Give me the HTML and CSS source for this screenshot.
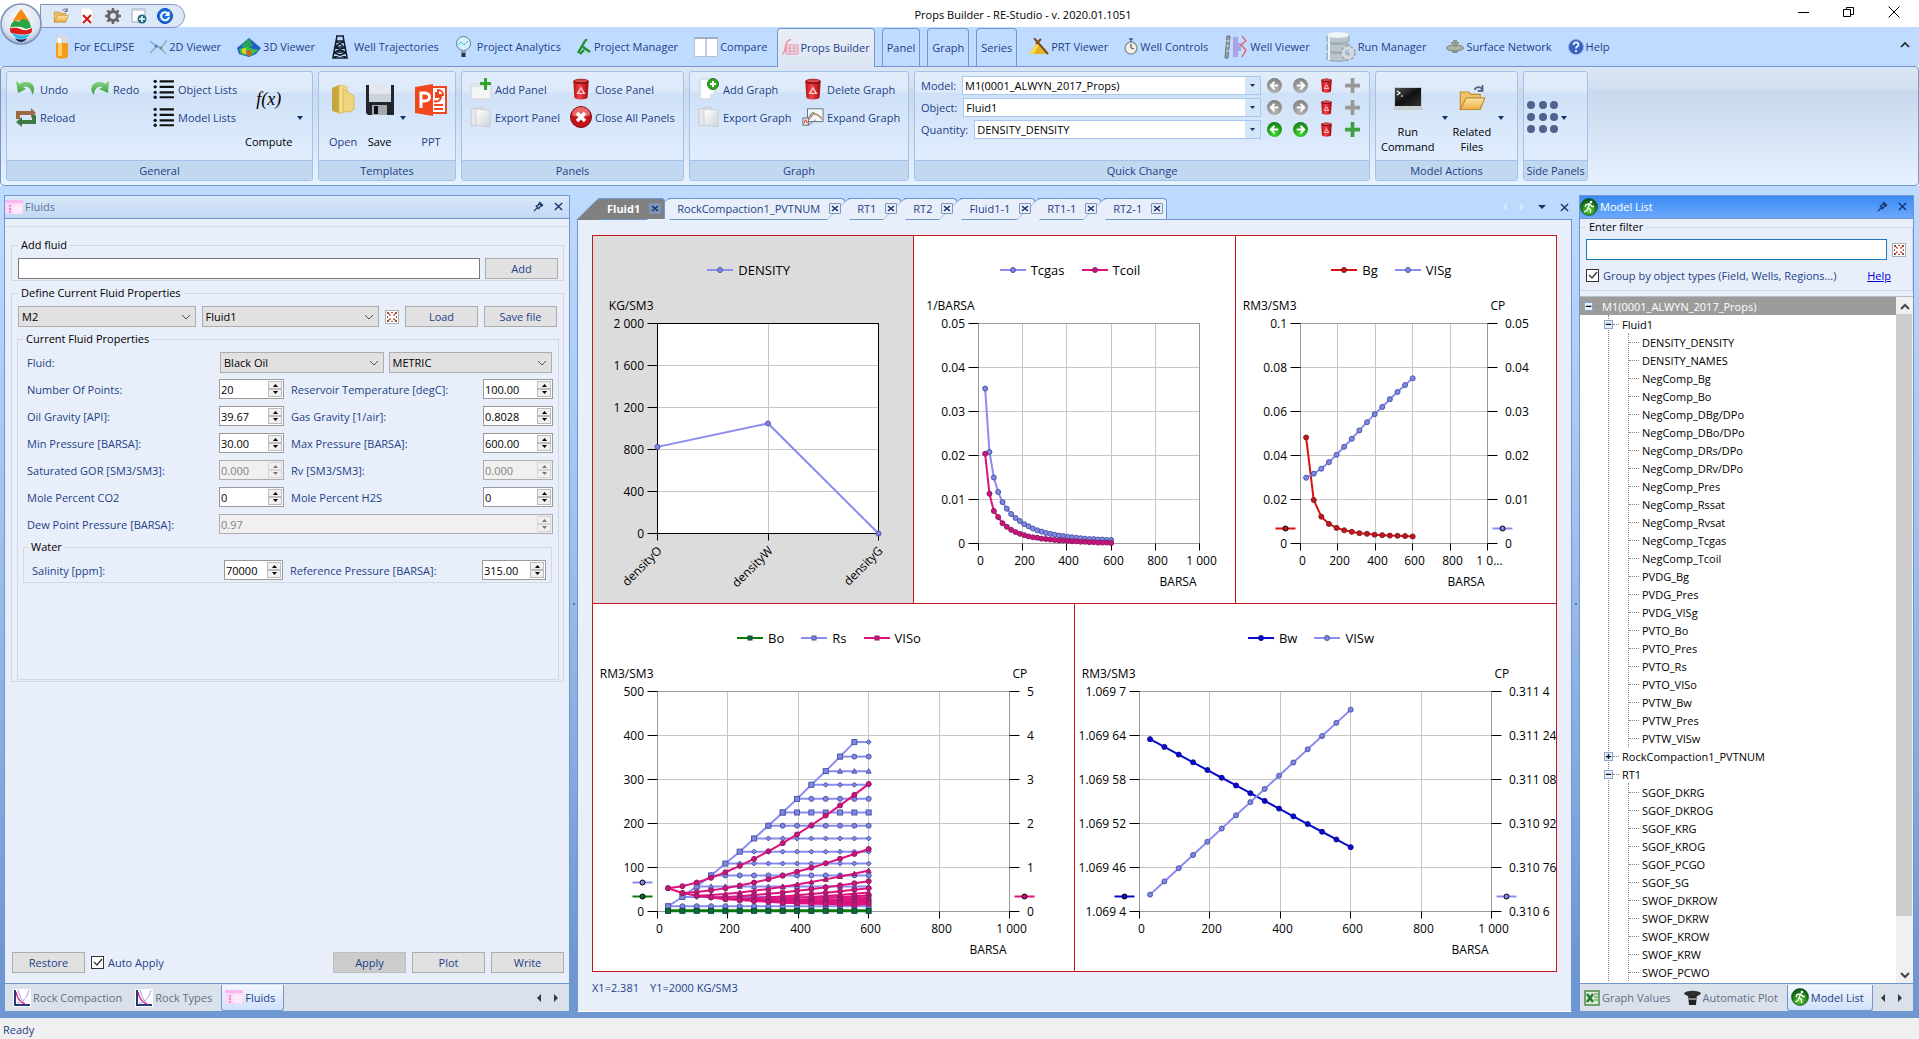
FILE: index.html
```html
<!DOCTYPE html>
<html lang="en">
<head>
  <meta charset="UTF-8">
  <meta name="viewport" content="width=device-width, initial-scale=1.0">
  <title>Props Builder - RE-Studio - v. 2020.01.1051</title>
  <link rel="stylesheet" href="styles.css">
</head>
<body>
  <!-- Shared icons -->
  <svg class="sprite" aria-hidden="true">
    <defs>
      <linearGradient id="gFolder" x1="0" y1="0" x2="0" y2="1"><stop offset="0" stop-color="#fde6a6"/><stop offset="1" stop-color="#e9ac45"/></linearGradient>
      <linearGradient id="gGreen" x1="0" y1="0" x2="0" y2="1"><stop offset="0" stop-color="#8fd487"/><stop offset="1" stop-color="#2f9a33"/></linearGradient>
      <linearGradient id="gRed" x1="0" y1="0" x2="1" y2="0"><stop offset="0" stop-color="#b30d12"/><stop offset=".4" stop-color="#f0444a"/><stop offset="1" stop-color="#a3070c"/></linearGradient>
      <linearGradient id="gPage" x1="0" y1="0" x2="1" y2="1"><stop offset="0" stop-color="#fff"/><stop offset="1" stop-color="#cfd3d8"/></linearGradient>
      <linearGradient id="gBlack" x1="0" y1="0" x2="1" y2="1"><stop offset="0" stop-color="#555"/><stop offset=".5" stop-color="#111"/><stop offset="1" stop-color="#333"/></linearGradient>
      <radialGradient id="gRunner" cx=".5" cy=".7" r=".6"><stop offset="0" stop-color="#5fd42c"/><stop offset="1" stop-color="#0b5c16"/></radialGradient>
      <radialGradient id="gOrb" cx=".5" cy=".35" r=".7"><stop offset="0" stop-color="#fff"/><stop offset=".7" stop-color="#d9e2f0"/><stop offset="1" stop-color="#8ea4c9"/></radialGradient>
    </defs>
    <symbol id="folder" viewBox="0 0 24 24">
      <path d="M2 21V6h7l2 2h8v13z" fill="#f0c266" stroke="#c48b2b"/>
      <path d="M2 21l5-10h16l-4 10z" fill="url(#gFolder)" stroke="#c48b2b"/>
      <path d="M14 4c2-3 5-3 7 0M21 0v5h-4" fill="none" stroke="#4a607c" stroke-width="1.5"/>
    </symbol>
    <symbol id="list" viewBox="0 0 20 18">
      <g fill="#111"><circle cx="2" cy="2" r="1.5"/><circle cx="2" cy="7" r="1.5"/><circle cx="2" cy="12" r="1.5"/><circle cx="2" cy="16.500" r="1.500"/>
      <path d="M6 1h13v2H6zM6 6h13v2H6zM6 11h13v2H6zM6 15.500h13v2H6z"/></g>
    </symbol>
    <symbol id="bin" viewBox="0 0 16 20">
      <path d="M1 3l1 15c2 2 10 2 12 0l1-15z" fill="url(#gRed)"/>
      <ellipse cx="8" cy="3" rx="7" ry="2.400" fill="#7c0a0e"/><ellipse cx="8" cy="2.600" rx="6" ry="1.500" fill="#d9484c"/>
      <path d="M8 9l3 5H5z" fill="none" stroke="#ffc9c9" stroke-width="1.300"/>
    </symbol>
    <symbol id="pages" viewBox="0 0 22 22">
      <path d="M1 3l12-2v17L1 20z" fill="#e6e8eb" stroke="#c5c9ce"/>
      <path d="M6 3l14 1v17L6 19z" fill="url(#gPage)" stroke="#c9cdd2"/>
    </symbol>
    <symbol id="prev" viewBox="0 0 16 16"><path d="M12 8H5M8 4L4 8l4 4" fill="none" stroke="#fff" stroke-width="2"/></symbol>
    <symbol id="next" viewBox="0 0 16 16"><path d="M4 8h7M8 4l4 4-4 4" fill="none" stroke="#fff" stroke-width="2"/></symbol>
    <symbol id="plus" viewBox="0 0 16 16"><path d="M6 0h4v6h6v4h-6v6H6v-6H0V6h6z"/></symbol>
    <symbol id="runner" viewBox="0 0 18 18">
      <circle cx="9" cy="9" r="8.500" fill="url(#gRunner)" stroke="#0a4310" stroke-width=".6"/>
      <circle cx="11" cy="4" r="1.300" fill="#fff"/>
      <path d="M10 5.500L8 9.500l2.500 2V15M8.300 9.500L7 12.500l-3 1.500M9.800 6L6 6.500 5 9M10 6.500l2 2h2" fill="none" stroke="#fff" stroke-width="1.300"/>
    </symbol>
    <symbol id="pin" viewBox="0 0 12 12">
      <path d="M1 11l4-4M3 5l4 4M4 6l3-3M6 8l3-3M6 2l4 4M7 1l4 4" fill="none" stroke="#16336b" stroke-width="1.400"/>
    </symbol>
    <symbol id="close" viewBox="0 0 10 10"><path d="M1 1l8 8M9 1L1 9" fill="none" stroke="#16336b" stroke-width="1.500"/></symbol>
    <symbol id="clear" viewBox="0 0 12 12">
      <path d="M1 1h2v2H1zM5 1h2v1H5zM9 1h2v2H9zM1 5h1v2H1zM10 5h1v2h-1zM1 9h2v2H1zM5 10h2v1H5zM9 9h2v2H9z" fill="#9a5236"/>
      <path d="M3 3l6 6M9 3L3 9" stroke="#fff" stroke-width="2.400"/><path d="M3 3l1.500 1.500M9 3L7.500 4.500M3 9l1.500-1.500M9 9L7.500 7.500" stroke="#cf4a2c" stroke-width="1.500"/>
    </symbol>
    <symbol id="form" viewBox="0 0 18 16">
      <path d="M0 1h18v14H0z" fill="#fbd9f7"/><path d="M0 1h18v3H0z" fill="#f9b8f0"/>
      <path d="M4 6h2v2H4zM4 9h2v2H4zM4 12h2v2H4z" fill="#ee86d8"/><path d="M8 6h9v8H8z" fill="#fdeafa"/>
    </symbol>
    <symbol id="curve" viewBox="0 0 18 18">
      <path d="M0 0h18v18H0z" fill="#fff"/><path d="M2 1v15h15" fill="none" stroke="#243a7a" stroke-width="2"/>
      <path d="M3 3c1 6 4 10 9 12" fill="none" stroke="#e0107c" stroke-width="1.400"/><path d="M4 14c6-1 10-5 12-13M5 1c2 6 3 10 6 12" fill="none" stroke="#a99be8"/>
    </symbol>
  </svg>

  <!-- Title bar -->
  <header class="title-bar">
    <button class="orb" aria-label="Application menu">
      <svg viewBox="0 0 42 42">
        <circle cx="21" cy="21" r="20" fill="url(#gOrb)" stroke="#7e90b5" stroke-width="1.500"/>
        <path d="M21 6c3 4 6 8 8 12-5 3-8-2-13 0-1 0-2 1-3 0 2-4 5-8 8-12z" fill="#f58a13"/>
        <path d="M12 20c3-5 6 1 9-3 3-3 5 1 8 1 1 3 2 5 2 7-4 2-7 0-10-1-4-1-7 1-10 1-1-2 0-3 1-5z" fill="#2aa544"/>
        <path d="M10 25c5-2 8 0 11 1s6 1 11-1c0 2 0 4-1 5-7 3-14 1-20 0-1-2-1-3-1-5z" fill="#dd1c1c"/>
        <path d="M12 30c6 3 13 3 18 1-2 3-5 5-9 5s-7-2-9-6z" fill="#27b8ea"/>
        <path d="M15 35c4 2 8 2 12 0-2 3-4 4-6 4s-4-1-6-4z" fill="#16265c"/>
        <path d="M11 25c5-2 8 0 11 1s5 1 9-1" fill="none" stroke="#fff"/>
      </svg>
    </button>
    <div class="quick-access">
      <button aria-label="Open"><svg viewBox="0 0 24 24"><use href="#folder"/></svg></button>
      <button aria-label="Delete"><svg viewBox="0 0 16 16"><path d="M2 0h9l3 3v13H2z" fill="#fff" stroke="#ddd"/><path d="M4 7l8 8M12 7l-8 8" stroke="#d1131a" stroke-width="2"/></svg></button>
      <button aria-label="Settings"><svg viewBox="0 0 16 16"><circle cx="8" cy="8" r="4.500" fill="none" stroke="#666" stroke-width="3"/><path d="M8 0v3M8 13v3M0 8h3M13 8h3M2.400 2.400l2 2M11.600 11.600l2 2M13.600 2.400l-2 2M4.400 11.600l-2 2" stroke="#666" stroke-width="2.500"/></svg></button>
      <button aria-label="Add"><svg viewBox="0 0 16 16"><path d="M1 1h13v13H1z" fill="#fff" stroke="#9ab"/><path d="M1 1h13v2H1z" fill="#cbd5e2"/><circle cx="11" cy="11" r="4.500" fill="#1d6f80"/><path d="M11 8v6M8 11h6" stroke="#fff" stroke-width="1.500"/></svg></button>
      <button aria-label="Refresh"><svg viewBox="0 0 16 16"><circle cx="8" cy="8" r="7.500" fill="#1c6de0" stroke="#0c47a8"/><path d="M11 5.500A4 4 0 1 0 12 9" fill="none" stroke="#fff" stroke-width="2"/><path d="M12.500 3v5h-5z" fill="#fff"/></svg></button>
    </div>
    <div class="title-text">Props Builder - RE-Studio - v. 2020.01.1051</div>
    <div class="window-buttons">
      <button aria-label="Minimize"><svg viewBox="0 0 12 12"><path d="M0 6.500h11" stroke="#000"/></svg></button>
      <button aria-label="Restore down"><svg viewBox="0 0 12 12"><path d="M.5 3.500h7v7h-7zM3.500 3.500v-2h7v7h-3" fill="none" stroke="#000"/></svg></button>
      <button aria-label="Close"><svg viewBox="0 0 12 12"><path d="M.5.5l11 11M11.500.5l-11 11" stroke="#000"/></svg></button>
    </div>
  </header>

  <!-- Ribbon tabs -->
  <nav class="ribbon-tabs">
    <button class="rtab spaced"><svg width="14" height="24" viewBox="0 0 14 24"><path d="M1 3h12v19c-2 2-10 2-12 0z" fill="#f59a1b"/><path d="M3 8h4v13H3z" fill="#ffd069"/><path d="M1 2c2-2 10-2 12 0v6H1z" fill="#d9dbde"/><path d="M3 3h3v5H3z" fill="#fff"/></svg>For ECLIPSE</button>
    <button class="rtab"><svg width="17" height="14" viewBox="0 0 17 14"><path d="M0 1l6 5 4 2 6 6M0 13l7-7 4 2 6-8" fill="none" stroke="#8aa0b8" stroke-width="1.200"/><circle cx="6" cy="6" r="1.500" fill="#3f7fd0"/><circle cx="11" cy="8" r="1.500" fill="#4aa36a"/></svg>2D Viewer</button>
    <button class="rtab"><svg width="24" height="20" viewBox="0 0 24 20"><path d="M0 11L12 1l12 10-5 6-7 3-10-3z" fill="#1f5ec4"/><path d="M4 9l8-8 4 8-7 3z" fill="#27a35c"/><path d="M2 12l8-2 6 2 6 1-9 6-9-2z" fill="#3fc24a"/><path d="M5 12l4-1v6l-4-1z" fill="#e4d21e"/><path d="M9 14l5-1v5l-3 1z" fill="#e8541b"/></svg>3D Viewer</button>
    <button class="rtab spaced"><svg width="18" height="24" viewBox="0 0 18 24"><path d="M5 1h8M6 1L2 22M12 1l4 21M5 6l7 5M13 6l-8 5M4 12l10 5M14 12L4 17M3 18l12 4M15 18L3 22M5 6h8M4 12h10M3 17h12M1 23h16" fill="none" stroke="#15202c" stroke-width="1.500"/></svg>Well Trajectories</button>
    <button class="rtab spaced"><svg width="17" height="22" viewBox="0 0 17 22"><circle cx="8.500" cy="7.500" r="7" fill="#d7f1fa" stroke="#5b7f9a"/><path d="M3 9l3-3 3 3 4-4" fill="none" stroke="#3fb9d8"/><path d="M6 14h5v3H6z" fill="#8ba0b0"/><path d="M6.500 17h4v4h-4z" fill="#2b3540"/></svg>Project Analytics</button>
    <button class="rtab"><svg width="15" height="16" viewBox="0 0 15 16"><path d="M1 14L8 2M6 8l7 5M3 15l4-4M8 2l2-2" fill="none" stroke="#1f8f2f" stroke-width="2.400"/></svg>Project Manager</button>
    <button class="rtab compare"><svg width="24" height="20" viewBox="0 0 24 20"><path d="M.5.5h23v19H.5z" fill="#fff" stroke="#b9c2cc"/><path d="M0 0h24v2H0z" fill="#9fb0c4"/><path d="M12 1v18" stroke="#8d9db1"/></svg>Compare</button>
    <button class="rtab boxed active"><svg width="17" height="16" viewBox="0 0 17 16"><path d="M4 6h12v9H4zM8 6v9M12 6v9M4 9h12M4 12h12" fill="none" stroke="#ef8fa0"/><path d="M0 15c4-1 3-8 4-10 1-3 3-4 5-5" fill="none" stroke="#ef8fa0" stroke-width="1.500"/></svg>Props Builder</button>
    <button class="rtab boxed">Panel</button>
    <button class="rtab boxed">Graph</button>
    <button class="rtab boxed">Series</button>
    <button class="rtab prt"><svg width="22" height="18" viewBox="0 0 22 18"><path d="M11 3l8 13H2z" fill="#e6b422"/><path d="M2 16l9-13 2 2-6 11z" fill="#f7d95a"/><path d="M7 0l14 16M14 1L9 6" stroke="#7a4b1b" stroke-width="2"/></svg>PRT Viewer</button>
    <button class="rtab"><svg width="14" height="17" viewBox="0 0 14 17"><circle cx="7" cy="10" r="6" fill="#f4efe2" stroke="#8d97a5" stroke-width="1.500"/><path d="M7 0v4M5 1h4M7 10V6M7 10l3 1" stroke="#52617a" stroke-width="1.300"/></svg>Well Controls</button>
    <button class="rtab"><svg width="24" height="24" viewBox="0 0 24 24"><path d="M3 1h3L4 23H1z" fill="#9aa1a8" stroke="#6b7178"/><path d="M2 6h4M2 11h3M2 16h3" stroke="#dde"/><path d="M9 2h5v6h3v8h-3v6H9z" fill="#a9a4e8"/><path d="M18 1l4 5-5 4 5 5-4 7" fill="none" stroke="#e8504c" stroke-width="1.200"/></svg>Well Viewer</button>
    <button class="rtab run"><svg width="30" height="32" viewBox="0 0 30 32"><g fill="#bac6cc" stroke="#83939b" stroke-width=".8"><path d="M1 22v6c4 3 18 3 22 0v-6z"/><path d="M1 13v6c4 3 18 3 22 0v-6z"/><path d="M1 4v6c4 3 18 3 22 0V4z"/></g><ellipse cx="12" cy="4" rx="11" ry="3" fill="#eef3f5"/><path d="M3 6v23M3 15v5" stroke="#edf4f7" stroke-width="2"/><circle cx="22" cy="22" r="5" fill="none" stroke="#d5d9dd" stroke-width="4"/><circle cx="22" cy="22" r="7" fill="none" stroke="#9ba3a8" stroke-dasharray="3 2" stroke-width="1.500"/></svg>Run Manager</button>
    <button class="rtab"><svg width="18" height="15" viewBox="0 0 18 15"><ellipse cx="9" cy="9" rx="8.500" ry="3" fill="#aeb4a6" stroke="#7b8278"/><path d="M7 1h4v7H7zM5 3h8v2H5z" fill="#90978b"/><path d="M5 11h8l-2 3H7z" fill="#8a8f85"/></svg>Surface Network</button>
    <button class="rtab"><svg width="16" height="16" viewBox="0 0 16 16"><circle cx="8" cy="8" r="7.500" fill="#3a62c0" stroke="#8fa9e0"/><path d="M5.500 6c0-4 5.500-3 5 0-.3 1.500-2.500 1.500-2.500 3.500M8 11v2" fill="none" stroke="#fff" stroke-width="1.700"/></svg>Help</button>
    <button class="collapse" aria-label="Collapse the ribbon"><svg width="10" height="6" viewBox="0 0 10 6"><path d="M1 5l4-4 4 4" fill="none" stroke="#222" stroke-width="1.700"/></svg></button>
  </nav>

  <!-- Ribbon -->
  <section class="ribbon">
    <div class="group g-general">
      <div class="group-body">
        <div class="tools">
          <button class="tool"><svg viewBox="0 0 22 18"><path d="M1 1l2 12 8-4-3-2c5-2 9 2 9 8 4-5 3-14-7-13-3 0-4 1-5 2z" fill="url(#gGreen)"/></svg>Undo</button>
          <button class="tool"><svg viewBox="0 0 22 18"><path d="M21 1l-1 12-9-4 4-2C10 5 6 9 6 15 1 10 3 2 12 2c3 0 4 1 5 2z" fill="url(#gGreen)"/></svg>Redo</button>
          <button class="tool"><svg class="narrow" viewBox="0 0 20 18"><use href="#list"/></svg>Object Lists</button>
          <button class="tool"><svg viewBox="0 0 22 20"><path d="M1 12V4h15V1l5 5-5 5V8H5v4z" fill="#9a6a45"/><path d="M21 8v9H7v3l-6-5 6-5v3h10V8z" fill="#3e7a45"/></svg>Reload</button>
          <span></span>
          <button class="tool"><svg class="narrow" viewBox="0 0 20 18"><use href="#list"/></svg>Model Lists</button>
        </div>
        <button class="big dark compute"><span class="big-main"><span class="big-icon fx">f(x)</span><span class="big-label">Compute</span></span><i class="arrow"></i></button>
      </div>
      <h2>General</h2>
    </div>

    <div class="group g-templates">
      <div class="group-body">
        <button class="big"><span class="big-main"><span class="big-icon"><svg width="24" height="32" viewBox="0 0 24 32"><path d="M1 4l7-3v28l-7-2z" fill="#c9a63d"/><path d="M8 1l8 2v24L8 30z" fill="#f4df8c" stroke="#d8bd58"/><path d="M12 5l11 7v13l-4 3-7-1z" fill="#efd67a" stroke="#d8bd58"/></svg></span><span class="big-label">Open</span></span></button>
        <button class="big dark"><span class="big-main"><span class="big-icon"><svg width="28" height="30" viewBox="0 0 28 30"><path d="M0 0h28v30H2l-2-2z" fill="#20242c"/><path d="M3 0h22v17H3z" fill="#e4e8ee"/><path d="M3 9h22v8H3z" fill="#ccd2da"/><path d="M6 20h15v10H6z" fill="#a2a6ad"/><path d="M8 21h4v8H8z" fill="#111"/></svg></span><span class="big-label">Save</span></span><i class="arrow"></i></button>
        <button class="big"><span class="big-main"><span class="big-icon"><svg width="32" height="32" viewBox="0 0 32 32"><path d="M0 3l18-3v32L0 29z" fill="#f0471f"/><path d="M18 3h13v26H18" fill="#fff" stroke="#f0471f" stroke-width="2"/><path d="M6 24V9h4c6 0 6 8 0 8H6" fill="none" stroke="#fff" stroke-width="3"/><path d="M21 8v5h5a5 5 0 0 1-7 4M23 6a5 5 0 0 1 5 5h-5zM19 21h9M19 25h9" fill="none" stroke="#f0471f" stroke-width="2"/></svg></span><span class="big-label">PPT</span></span></button>
      </div>
      <h2>Templates</h2>
    </div>

    <div class="group g-panels">
      <div class="group-body">
        <div class="tools">
          <button class="tool"><svg viewBox="0 0 22 22"><path d="M1 6h20v15H1z" fill="#f3f5f7" stroke="#cdd3da"/><path d="M1 6h20v3H1z" fill="#dfe4ea"/><path d="M14 0h3v4h4v3h-4v5h-3V7h-4V4h4z" fill="#34a52c"/></svg>Add Panel</button>
          <button class="tool"><svg viewBox="0 0 16 20"><use href="#bin"/></svg>Close Panel</button>
          <button class="tool"><svg viewBox="0 0 22 22"><use href="#pages"/></svg>Export Panel</button>
          <button class="tool"><svg viewBox="0 0 22 22"><circle cx="11" cy="11" r="10.500" fill="#c31418" stroke="#7e0a0c"/><path d="M2 9a9 8 0 0 1 18 0c-6 3-12 3-18 0z" fill="#e8696b"/><path d="M7 7l8 8M15 7l-8 8" stroke="#fff" stroke-width="3.500"/></svg>Close All Panels</button>
        </div>
      </div>
      <h2>Panels</h2>
    </div>

    <div class="group g-graph">
      <div class="group-body">
        <div class="tools">
          <button class="tool"><svg viewBox="0 0 22 22"><path d="M2 1h15v14l-5 6H2z" fill="#fff" stroke="#c5d0dd"/><path d="M17 15l-5 6v-5z" fill="#dbe2ea"/><circle cx="15" cy="6" r="5.500" fill="#36a425" stroke="#1d7a12"/><path d="M15 3v6M12 6h6" stroke="#fff" stroke-width="2"/></svg>Add Graph</button>
          <button class="tool"><svg viewBox="0 0 16 20"><use href="#bin"/></svg>Delete Graph</button>
          <button class="tool"><svg viewBox="0 0 22 22"><use href="#pages"/></svg>Export Graph</button>
          <button class="tool"><svg viewBox="0 0 24 20"><path d="M6 1h17v14H6z" fill="#f4f8f6" stroke="#5a6b7c"/><path d="M7 12c3-8 5-8 8-5s4 1 7 4" fill="none" stroke="#3fa35a"/><path d="M8 13l4-6h5l5 6" fill="none" stroke="#e04848"/><path d="M1 11h6v8H1zM7 11l6-6M7 19l8-6" fill="#f1e5e5" stroke="#5a6b7c"/><path d="M2 17l2-4 2 4" fill="none" stroke="#d22"/></svg>Expand Graph</button>
        </div>
      </div>
      <h2>Graph</h2>
    </div>

    <div class="group g-quick">
      <div class="group-body quick">
        <div class="quick-row">
          <label for="model">Model:</label>
          <select id="model" class="combo"><option>M1(0001_ALWYN_2017_Props)</option></select>
          <button class="round off" aria-label="Previous model"><svg viewBox="0 0 16 16"><use href="#prev"/></svg></button>
          <button class="round off" aria-label="Next model"><svg viewBox="0 0 16 16"><use href="#next"/></svg></button>
          <button class="mini" aria-label="Delete model"><svg viewBox="0 0 16 20"><use href="#bin"/></svg></button>
          <button class="mini add-off" aria-label="Add model"><svg viewBox="0 0 16 16"><use href="#plus"/></svg></button>
        </div>
        <div class="quick-row">
          <label for="object">Object:</label>
          <select id="object" class="combo"><option>Fluid1</option></select>
          <button class="round off" aria-label="Previous object"><svg viewBox="0 0 16 16"><use href="#prev"/></svg></button>
          <button class="round off" aria-label="Next object"><svg viewBox="0 0 16 16"><use href="#next"/></svg></button>
          <button class="mini" aria-label="Delete object"><svg viewBox="0 0 16 20"><use href="#bin"/></svg></button>
          <button class="mini add-off" aria-label="Add object"><svg viewBox="0 0 16 16"><use href="#plus"/></svg></button>
        </div>
        <div class="quick-row">
          <label for="quantity">Quantity:</label>
          <select id="quantity" class="combo"><option>DENSITY_DENSITY</option></select>
          <button class="round" aria-label="Previous quantity"><svg viewBox="0 0 16 16"><use href="#prev"/></svg></button>
          <button class="round" aria-label="Next quantity"><svg viewBox="0 0 16 16"><use href="#next"/></svg></button>
          <button class="mini" aria-label="Delete quantity"><svg viewBox="0 0 16 20"><use href="#bin"/></svg></button>
          <button class="mini add-on" aria-label="Add quantity"><svg viewBox="0 0 16 16"><use href="#plus"/></svg></button>
        </div>
      </div>
      <h2>Quick Change</h2>
    </div>

    <div class="group g-actions">
      <div class="group-body">
        <button class="big dark"><span class="big-main"><span class="big-icon"><svg width="30" height="23" viewBox="0 0 30 23"><path d="M1 0h28v20l1 3H0l1-3z" fill="#c9ccd0"/><path d="M2 1h26v18H2z" fill="url(#gBlack)"/><path d="M4 4l3 2-3 2M8 9h2" fill="none" stroke="#fff" stroke-width="1.200"/></svg></span><span class="big-label">Run<br>Command</span></span><i class="arrow"></i></button>
        <button class="big dark"><span class="big-main"><span class="big-icon"><svg width="30" height="28" viewBox="0 0 24 24"><use href="#folder"/></svg></span><span class="big-label">Related<br>Files</span></span><i class="arrow"></i></button>
      </div>
      <h2>Model Actions</h2>
    </div>

    <div class="group g-side">
      <div class="group-body">
        <button class="dots" aria-label="Side panels">
          <svg width="33" height="33" viewBox="0 0 33 33" fill="#50628c"><circle cx="5" cy="4" r="4"/><circle cx="17" cy="4" r="4"/><circle cx="28" cy="4" r="4"/><circle cx="5" cy="16" r="4"/><circle cx="17" cy="16" r="4"/><circle cx="28" cy="16" r="4"/><circle cx="5" cy="28" r="4"/><circle cx="17" cy="28" r="4"/><circle cx="28" cy="28" r="4"/></svg>
          <i class="arrow"></i>
        </button>
      </div>
      <h2>Side Panels</h2>
    </div>
  </section>

  <main class="workspace">
    <!-- Fluids panel -->
    <aside class="dock dock-left">
      <div class="dock-title">
        <svg width="18" height="16"><use href="#form"/></svg><span>Fluids</span>
        <button aria-label="Pin"><svg width="11" height="11"><use href="#pin"/></svg></button>
        <button aria-label="Close"><svg width="9" height="9"><use href="#close"/></svg></button>
      </div>
      <form class="dock-body fluids">
        <fieldset class="add-fluid">
          <legend>Add fluid</legend>
          <div class="line">
            <input type="text" class="text-box" aria-label="Fluid name">
            <button type="button" class="btn">Add</button>
          </div>
        </fieldset>

        <fieldset class="define">
          <legend>Define Current Fluid Properties</legend>
          <div class="line">
            <select class="drop" aria-label="Model"><option>M2</option></select>
            <select class="drop" aria-label="Fluid name"><option>Fluid1</option></select>
            <button type="button" class="clear" aria-label="Clear"><svg width="12" height="12"><use href="#clear"/></svg></button>
            <button type="button" class="btn">Load</button>
            <button type="button" class="btn">Save file</button>
          </div>

          <fieldset class="current">
            <legend>Current Fluid Properties</legend>
            <div class="fluid-row">
              <label for="fluidType">Fluid:</label>
              <select id="fluidType" class="drop"><option>Black Oil</option></select>
              <select class="drop" aria-label="Units"><option>METRIC</option></select>
            </div>
            <div class="props">
              <label for="points">Number Of Points:</label>
              <div class="spin"><input id="points" type="text" value="20"><span><button type="button" aria-label="Up"></button><button type="button" aria-label="Down"></button></span></div>
              <label for="temp">Reservoir Temperature [degC]:</label>
              <div class="spin"><input id="temp" type="text" value="100.00"><span><button type="button" aria-label="Up"></button><button type="button" aria-label="Down"></button></span></div>

              <label for="oil">Oil Gravity [API]:</label>
              <div class="spin"><input id="oil" type="text" value="39.67"><span><button type="button" aria-label="Up"></button><button type="button" aria-label="Down"></button></span></div>
              <label for="gas">Gas Gravity [1/air]:</label>
              <div class="spin"><input id="gas" type="text" value="0.8028"><span><button type="button" aria-label="Up"></button><button type="button" aria-label="Down"></button></span></div>

              <label for="minP">Min Pressure [BARSA]:</label>
              <div class="spin"><input id="minP" type="text" value="30.00"><span><button type="button" aria-label="Up"></button><button type="button" aria-label="Down"></button></span></div>
              <label for="maxP">Max Pressure [BARSA]:</label>
              <div class="spin"><input id="maxP" type="text" value="600.00"><span><button type="button" aria-label="Up"></button><button type="button" aria-label="Down"></button></span></div>

              <label for="gor">Saturated GOR [SM3/SM3]:</label>
              <div class="spin off"><input id="gor" type="text" value="0.000" disabled><span><button type="button" aria-label="Up" disabled></button><button type="button" aria-label="Down" disabled></button></span></div>
              <label for="rv">Rv [SM3/SM3]:</label>
              <div class="spin off"><input id="rv" type="text" value="0.000" disabled><span><button type="button" aria-label="Up" disabled></button><button type="button" aria-label="Down" disabled></button></span></div>

              <label for="co2">Mole Percent CO2</label>
              <div class="spin"><input id="co2" type="text" value="0"><span><button type="button" aria-label="Up"></button><button type="button" aria-label="Down"></button></span></div>
              <label for="h2s">Mole Percent H2S</label>
              <div class="spin"><input id="h2s" type="text" value="0"><span><button type="button" aria-label="Up"></button><button type="button" aria-label="Down"></button></span></div>

              <label for="dew">Dew Point Pressure [BARSA]:</label>
              <div class="spin off wide"><input id="dew" type="text" value="0.97" disabled><span><button type="button" aria-label="Up" disabled></button><button type="button" aria-label="Down" disabled></button></span></div>
            </div>

            <fieldset class="water">
              <legend>Water</legend>
              <div class="props">
                <label for="salinity">Salinity [ppm]:</label>
                <div class="spin"><input id="salinity" type="text" value="70000"><span><button type="button" aria-label="Up"></button><button type="button" aria-label="Down"></button></span></div>
                <label for="refP">Reference Pressure [BARSA]:</label>
                <div class="spin"><input id="refP" type="text" value="315.00"><span><button type="button" aria-label="Up"></button><button type="button" aria-label="Down"></button></span></div>
              </div>
            </fieldset>
          </fieldset>
        </fieldset>

        <div class="form-buttons">
          <button type="button" class="btn">Restore</button>
          <label class="check"><input type="checkbox" checked>Auto Apply</label>
          <button type="button" class="btn pressed">Apply</button>
          <button type="button" class="btn">Plot</button>
          <button type="button" class="btn">Write</button>
        </div>
      </form>
      <div class="dock-tabs">
        <button><svg width="18" height="18"><use href="#curve"/></svg>Rock Compaction</button>
        <button><svg width="18" height="18"><use href="#curve"/></svg>Rock Types</button>
        <button class="active"><svg width="18" height="16"><use href="#form"/></svg>Fluids</button>
        <span class="scroll-arrows"><button class="left" aria-label="Scroll left"></button><button class="right" aria-label="Scroll right"></button></span>
      </div>
    </aside>

    <div class="splitter"></div>

    <!-- Documents -->
    <section class="documents">
      <div class="doc-tabs">
        <button class="doc-tab active"><span>Fluid1</span><i class="x"></i></button>
        <button class="doc-tab"><span>RockCompaction1_PVTNUM</span><i class="x"></i></button>
        <button class="doc-tab"><span>RT1</span><i class="x"></i></button>
        <button class="doc-tab"><span>RT2</span><i class="x"></i></button>
        <button class="doc-tab"><span>Fluid1-1</span><i class="x"></i></button>
        <button class="doc-tab"><span>RT1-1</span><i class="x"></i></button>
        <button class="doc-tab"><span>RT2-1</span><i class="x"></i></button>
        <div class="doc-tools">
          <span class="scroll-arrows pale"><button class="left" aria-label="Scroll left"></button><button class="right" aria-label="Scroll right"></button></span>
          <button class="down" aria-label="Window list"></button>
          <button aria-label="Close"><svg width="9" height="9"><use href="#close"/></svg></button>
        </div>
      </div>
      <div class="doc-page">
        <div class="charts">
          <div class="chart-row">
            <div class="chart selected" data-chart="density"></div>
            <div class="chart" data-chart="negComp"></div>
            <div class="chart" data-chart="gas"></div>
          </div>
          <div class="chart-row">
            <div class="chart" data-chart="oil"></div>
            <div class="chart" data-chart="water"></div>
          </div>
        </div>
        <div class="cursor-info"><span>X1=2.381</span><span>Y1=2000 KG/SM3</span></div>
      </div>
    </section>

    <div class="splitter"></div>

    <!-- Model list -->
    <aside class="dock dock-right">
      <div class="dock-title focused">
        <svg width="18" height="18"><use href="#runner"/></svg><span>Model List</span>
        <button aria-label="Pin"><svg width="11" height="11"><use href="#pin"/></svg></button>
        <button aria-label="Close"><svg width="9" height="9"><use href="#close"/></svg></button>
      </div>
      <div class="dock-body">
        <fieldset class="filter">
          <legend><label for="filter">Enter filter</label></legend>
          <div class="line">
            <input type="text" id="filter" class="text-box focus">
            <button type="button" class="clear" aria-label="Clear filter"><svg width="12" height="12"><use href="#clear"/></svg></button>
          </div>
          <div class="line group-line">
            <label class="check"><input type="checkbox" checked>Group by object types (Field, Wells, Regions...)</label>
            <a href="#">Help</a>
          </div>
        </fieldset>
        <div class="tree-box">
          <div class="tree">
            <div class="node root"><button class="toggle" aria-label="Collapse">−</button>M1(0001_ALWYN_2017_Props)</div>
            <div class="branch">
              <div class="node"><button class="toggle" aria-label="Collapse">−</button>Fluid1</div>
              <ul class="leaves">
                <li>DENSITY_DENSITY</li>
                <li>DENSITY_NAMES</li>
                <li>NegComp_Bg</li>
                <li>NegComp_Bo</li>
                <li>NegComp_DBg/DPo</li>
                <li>NegComp_DBo/DPo</li>
                <li>NegComp_DRs/DPo</li>
                <li>NegComp_DRv/DPo</li>
                <li>NegComp_Pres</li>
                <li>NegComp_Rssat</li>
                <li>NegComp_Rvsat</li>
                <li>NegComp_Tcgas</li>
                <li>NegComp_Tcoil</li>
                <li>PVDG_Bg</li>
                <li>PVDG_Pres</li>
                <li>PVDG_VISg</li>
                <li>PVTO_Bo</li>
                <li>PVTO_Pres</li>
                <li>PVTO_Rs</li>
                <li>PVTO_VISo</li>
                <li>PVTW_Bw</li>
                <li>PVTW_Pres</li>
                <li>PVTW_VISw</li>
              </ul>
              <div class="node"><button class="toggle" aria-label="Expand">+</button>RockCompaction1_PVTNUM</div>
              <div class="node"><button class="toggle" aria-label="Collapse">−</button>RT1</div>
              <ul class="leaves">
                <li>SGOF_DKRG</li>
                <li>SGOF_DKROG</li>
                <li>SGOF_KRG</li>
                <li>SGOF_KROG</li>
                <li>SGOF_PCGO</li>
                <li>SGOF_SG</li>
                <li>SWOF_DKROW</li>
                <li>SWOF_DKRW</li>
                <li>SWOF_KROW</li>
                <li>SWOF_KRW</li>
                <li>SWOF_PCWO</li>
              </ul>
            </div>
          </div>
          <div class="scrollbar">
            <button aria-label="Scroll up"><svg width="10" height="7" viewBox="0 0 10 7"><path d="M1 6l4-4 4 4" fill="none" stroke="#444" stroke-width="2"/></svg></button>
            <div class="thumb"></div>
            <div class="track"></div>
            <button aria-label="Scroll down"><svg width="10" height="7" viewBox="0 0 10 7"><path d="M1 1l4 4 4-4" fill="none" stroke="#444" stroke-width="2"/></svg></button>
          </div>
        </div>
      </div>
      <div class="dock-tabs">
        <button><svg width="16" height="16" viewBox="0 0 16 16"><path d="M1 1h14v14H1z" fill="#dcebd8" stroke="#4b8b4b" stroke-width="1.500"/><path d="M3 4l6 8M9 4l-6 8" stroke="#237a2b" stroke-width="2.400"/><path d="M10 4h4M10 7h4M10 10h4" stroke="#4b8b4b"/></svg>Graph Values</button>
        <button><svg width="17" height="16" viewBox="0 0 17 16"><path d="M4 4h9l-1 11H5z" fill="#222"/><path d="M0 3c4-3 13-3 17 0-2 5-15 5-17 0z" fill="#2e2e2e"/><path d="M4 8h9v2H4z" fill="#888"/></svg>Automatic Plot</button>
        <button class="active"><svg width="18" height="18"><use href="#runner"/></svg>Model List</button>
        <span class="scroll-arrows"><button class="left" aria-label="Scroll left"></button><button class="right" aria-label="Scroll right"></button></span>
      </div>
    </aside>
  </main>

  <footer class="status-bar">Ready</footer>

  <script src="charts.js"></script>
</body>
</html>
```
FILE: styles.css
```css
/* General styles */
* {
  margin: 0;
  padding: 0;
  box-sizing: border-box;
}
body {
  display: flex;
  flex-direction: column;
  height: 100vh;
  overflow: hidden;
  font-family: "Open Sans", "Segoe UI", sans-serif;
  font-size: 11px;
  line-height: 15px;
  color: #1e3f87;
  background-color: #fff;
}
button, input, select {
  font: inherit;
  color: inherit;
}
button {
  background: none;
  border: none;
  white-space: nowrap;
}
.sprite {
  position: absolute;
  width: 0;
  height: 0;
}

/* Title bar */
.title-bar {
  position: relative;
  display: flex;
  height: 27px;
  padding-left: 40px;
  background-color: #fff;
}
.orb {
  position: absolute;
  left: 0;
  top: 3px;
  width: 42px;
  height: 42px;
  z-index: 2;
}
.quick-access {
  display: flex;
  align-items: center;
  gap: 10px;
  width: 145px;
  height: 24px;
  margin-top: 4px;
  padding-left: 12px;
  border: 1px solid #7f93bf;
  border-radius: 0 12px 12px 0;
  background-color: #dde8f8;
}
.quick-access svg {
  display: block;
  width: 16px;
  height: 16px;
}
.title-text {
  flex: 1;
  padding-left: 80px;
  text-align: center;
  line-height: 30px;
  color: #000;
}
.window-buttons {
  display: flex;
  padding-right: 3px;
}
.window-buttons button {
  width: 45px;
}
.window-buttons svg {
  width: 12px;
  height: 12px;
}

/* Ribbon tabs */
.ribbon-tabs {
  display: flex;
  height: 39px;
  padding-left: 55px;
  background-color: #bfdbff;
}
.rtab {
  display: flex;
  align-items: center;
  gap: 2px;
  margin-right: 16px;
}
.rtab.spaced {
  gap: 5px;
}
.rtab.boxed {
  height: 39px;
  margin: 1px 7px 0 0;
  padding: 0 4px 2px;
  border: 1px solid #7396cf;
  border-bottom: none;
  border-radius: 4px 4px 0 0;
}
.rtab.active {
  gap: 1px;
  background: linear-gradient(#e9eff8, #dbe5f3);
  z-index: 1;
}
.rtab.compare {
  margin-right: 10px;
}
.rtab.prt {
  margin-left: 3px;
}
.rtab.run {
  margin-right: 20px;
}
.collapse {
  margin: 9px 9px auto auto;
}

/* Ribbon */
.ribbon {
  display: flex;
  gap: 5px;
  height: 120px;
  padding: 4px 5px;
  border: 1px solid #7396cf;
  border-radius: 4px;
  background: linear-gradient(#dbe6f4, #d3e0f0 18%, #c8d8ed 20%, #e7f2ff);
}
.group {
  display: flex;
  flex-direction: column;
  border: 1px solid #a3c2ea;
  border-radius: 3px;
  background: linear-gradient(#e2edfa, #dce9f9 18%, #cfe1f8 20%, #e6f1ff);
}
.group h2 {
  height: 20px;
  border-top: 1px solid #a3c2ea;
  background-color: #c2d8f0;
  font-size: 11px;
  font-weight: normal;
  line-height: 19px;
  text-align: center;
  white-space: nowrap;
}
.group-body {
  display: flex;
  flex: 1;
  padding: 3px 8px 0;
}
.g-general { width: 307px; }
.g-templates { width: 138px; }
.g-panels { width: 223px; }
.g-graph { width: 220px; }
.g-quick { width: 456px; }
.g-actions { width: 143px; }
.g-side { width: 65px; }
.g-side .group-body {
  padding: 3px 0 0 2px;
}
.tools {
  display: grid;
  grid-template-columns: 100px auto;
  grid-auto-rows: 28px;
  align-content: start;
  justify-content: start;
}
.g-general .tools {
  grid-template-columns: 73px 65px 90px;
}
.g-graph .tools {
  grid-template-columns: 104px auto;
}
.tool {
  display: flex;
  align-items: center;
  gap: 3px;
}
.tool svg {
  width: 22px;
  height: 22px;
}
.big {
  display: flex;
  align-items: flex-start;
}
.big.dark {
  color: #000;
}
.big-main {
  display: flex;
  flex-direction: column;
  align-items: center;
}
.big-icon {
  display: flex;
  align-items: center;
  height: 49px;
}
.big-label {
  display: flex;
  align-items: center;
  height: 34px;
  padding: 0 2px;
}
.fx {
  font: italic 18px "Liberation Serif", serif;
}
.arrow {
  width: 5px;
  margin: 41px 3px 0 6px;
  border: 3px solid transparent;
  border-top: 4px solid #16336b;
  border-bottom: none;
}
.compute .arrow {
  margin-left: 3px;
}
.g-templates .group-body {
  justify-content: space-between;
}
.g-actions .group-body {
  padding: 3px 3px 0;
}
.g-actions .big-icon {
  height: 47px;
}
.g-actions .arrow {
  margin-left: 5px;
}
.quick {
  flex-direction: column;
  gap: 2px;
  padding: 3px 7px 0 6px;
}
.quick-row {
  display: flex;
  align-items: center;
  gap: 6px;
  height: 20px;
}
.combo {
  flex: 1;
  min-width: 0;
  height: 19px;
  margin-right: -3px;
  padding-left: 2px;
  border: 1px solid #a8c6ee;
  border-radius: 0;
  appearance: none;
  color: #000;
  background: #fff url("data:image/svg+xml,%3Csvg xmlns='http://www.w3.org/2000/svg' width='15' height='17'%3E%3Cpath d='M0 0h15v17H0z' fill='%23d4e4f9'/%3E%3Cpath d='M5 7h5l-2.500 3z' fill='%2316336b'/%3E%3C/svg%3E") no-repeat right center;
}
.round, .mini {
  display: flex;
  align-items: center;
  justify-content: center;
  width: 20px;
  height: 16px;
}
.round svg {
  width: 15px;
  height: 15px;
  border-radius: 50%;
  background: radial-gradient(circle at 50% 80%, #3fdb2f, #0a6b12);
}
.round.off svg {
  background: radial-gradient(circle at 50% 80%, #b5b5b5, #777);
}
.mini svg {
  width: 15px;
  height: 15px;
}
.add-on svg {
  fill: #3f9f42;
}
.add-off svg {
  fill: #999;
}
.dots {
  display: flex;
  align-items: flex-start;
}
.dots svg {
  margin-top: 26px;
}
.dots .arrow {
  margin-left: 2px;
}

/* Workspace */
.workspace {
  display: flex;
  flex: 1;
  min-height: 0;
  padding: 9px 5px 6px 4px;
  background: linear-gradient(#bfdbff, #9dbeec 45%, #6f98d3 92%);
}
.splitter {
  width: 7px;
  background: radial-gradient(circle, #4f78b8 1px, transparent 1px) center / 4px 4px no-repeat;
}
.dock {
  display: flex;
  flex-direction: column;
  border: 1px solid #6f97cf;
}
.dock-left {
  width: 566px;
}
.dock-right {
  width: 335px;
}
.dock-title {
  display: flex;
  align-items: center;
  gap: 2px;
  height: 23px;
  padding: 0 2px 1px 0;
  border-bottom: 1px solid #6f97cf;
  background: linear-gradient(#d9e8fb, #c2d8f3);
  color: #5b739c;
}
.dock-title.focused {
  background: linear-gradient(#3b8bf4, #6ba8fb);
  color: #fff;
}
.dock-title span {
  flex: 1;
}
.dock-title button {
  width: 18px;
}
.dock-title button svg {
  display: block;
  margin: auto;
}
.dock-body {
  display: flex;
  flex-direction: column;
  flex: 1;
  min-height: 0;
  background-color: #e8effa;
}
.dock-tabs {
  display: flex;
  align-items: center;
  gap: 3px;
  height: 28px;
  padding: 0 11px 0 4px;
  border-top: 1px solid #6f97cf;
  background-color: #dae1ea;
  color: #5f6f88;
}
.dock-tabs > button {
  display: flex;
  align-items: center;
  gap: 2px;
  height: 26px;
  padding: 0 6px 0 4px;
}
.dock-right .dock-tabs {
  padding-left: 0;
}
.dock-tabs > button.active {
  padding: 0 8px 0 3px;
  border: 1px solid #7396cf;
  border-top: none;
  border-radius: 0 0 3px 3px;
  background: linear-gradient(#f2f7fe, #cfe1fb);
  color: #1e3f87;
}
.scroll-arrows {
  display: flex;
  gap: 13px;
  margin-left: auto;
}
.scroll-arrows button {
  border: 4px solid transparent;
  border-width: 4px 0;
}
.scroll-arrows .left {
  border-right: 4px solid #2e3a4c;
}
.scroll-arrows .right {
  border-left: 4px solid #2e3a4c;
}
.scroll-arrows.pale .left {
  border-right-color: #d9e9ff;
}
.scroll-arrows.pale .right {
  border-left-color: #d9e9ff;
}

/* Forms */
.fluids {
  padding: 18px 5px 0 6px;
  background: linear-gradient(#d5dce8, #d5dce8) 0 7px / 100% 1px no-repeat #e8effa;
}
fieldset {
  min-width: 0;
  border: 1px solid #d2d9e4;
}
legend {
  padding: 0 3px;
  line-height: 16px;
  color: #000;
}
.line {
  display: flex;
  align-items: center;
  gap: 5px;
}
.add-fluid {
  padding: 5px 5px 1px 6px;
}
.define {
  margin-top: 4px;
  padding: 5px 4px 1px 6px;
}
.define > .line {
  gap: 6px;
  padding-right: 2px;
}
.text-box {
  flex: 1;
  min-width: 0;
  height: 21px;
  padding: 0 3px;
  border: 1px solid #7a7a7a;
  background-color: #fff;
}
.text-box.focus {
  border-color: #1c78b8;
  outline: none;
}
.btn {
  width: 73px;
  height: 21px;
  border: 1px solid #adadad;
  background-color: #e1e1e1;
  text-align: center;
}
.btn.pressed {
  border-color: #bfbfbf;
  background-color: #cccccc;
}
.clear {
  width: 14px;
  height: 14px;
  border: 1px solid #adadad;
  background-color: #fff;
}
.clear svg {
  display: block;
}
.drop {
  flex: 1;
  min-width: 0;
  height: 21px;
  padding-left: 3px;
  border: 1px solid #adadad;
  border-radius: 0;
  appearance: none;
  color: #000;
  background: #e1e1e1 url("data:image/svg+xml,%3Csvg xmlns='http://www.w3.org/2000/svg' width='17' height='17'%3E%3Cpath d='M4 7l4 4 4-4' fill='none' stroke='%23555'/%3E%3C/svg%3E") no-repeat right center;
}
.current {
  height: 349px;
  margin: 4px 0 0 -1px;
  padding: 5px 6px 0 5px;
}
.fluid-row {
  display: flex;
  align-items: center;
  gap: 5px;
  margin: 0 0 6px 4px;
}
.fluid-row label {
  width: 188px;
}
.props {
  display: grid;
  grid-template-columns: 185px 65px 185px 70px;
  column-gap: 7px;
  row-gap: 7px;
  align-items: center;
  margin-left: 4px;
}
.spin {
  display: flex;
  height: 20px;
  padding: 1px;
  border: 1px solid #9a9a9a;
  background-color: #fff;
}
.spin.wide {
  grid-column: 2 / 5;
}
.spin input {
  flex: 1;
  width: 0;
  border: none;
  background: none;
  line-height: 15px;
  color: #000;
}
.spin span {
  display: flex;
  flex-direction: column;
  width: 14px;
}
.spin span button {
  flex: 1;
  border: 1px solid #bcbcbc;
  background: #f0f0f0 url("data:image/svg+xml,%3Csvg xmlns='http://www.w3.org/2000/svg' width='7' height='4'%3E%3Cpath d='M1 4h5L3.500 1z'/%3E%3C/svg%3E") no-repeat center;
}
.spin span button:last-child {
  background-image: url("data:image/svg+xml,%3Csvg xmlns='http://www.w3.org/2000/svg' width='7' height='4'%3E%3Cpath d='M1 0h5L3.500 3z'/%3E%3C/svg%3E");
}
.spin.off {
  border-color: #adadad;
  background-color: #f0f0f0;
}
.spin.off input {
  color: #838383;
}
.spin.off span button {
  opacity: 0.5;
}
.water {
  margin-top: 5px;
  padding: 5px 5px 2px 4px;
}
.water .props {
  grid-template-columns: 185px 59px 185px 64px;
}
.form-buttons {
  display: flex;
  align-items: center;
  gap: 6px;
  margin: auto 0 10px 1px;
}
.form-buttons .pressed {
  margin-left: auto;
}
.check {
  display: flex;
  align-items: center;
  gap: 4px;
}
.check input {
  width: 13px;
  height: 13px;
  border: 1px solid #333;
  appearance: none;
  background: #fff url("data:image/svg+xml,%3Csvg xmlns='http://www.w3.org/2000/svg' width='11' height='11'%3E%3Cpath d='M2 5l3 3 5-6' fill='none' stroke='%23333' stroke-width='1.300'/%3E%3C/svg%3E") no-repeat center;
}

/* Documents */
.documents {
  display: flex;
  flex-direction: column;
  flex: 1;
  min-width: 0;
}
.doc-tabs {
  display: flex;
  height: 24px;
  padding: 3px 0 0 9px;
}
.doc-tab {
  position: relative;
  display: flex;
  align-items: center;
  gap: 9px;
  height: 21px;
  margin-left: 12px;
  margin-right: -9px;
  padding: 0 3px 2px 9px;
  border: 1px solid #6f97cf;
  border-width: 1px 1px 0 0;
  border-radius: 0 4px 0 0;
  background-color: #e8effa;
}
/* slanted left edge */
.doc-tab::before {
  content: "";
  position: absolute;
  left: -11px;
  top: -1px;
  width: 22px;
  height: 21px;
  border: 1px solid #6f97cf;
  border-width: 1px 0 0 1px;
  border-radius: 4px 0 0 0;
  background-color: inherit;
  transform: skewX(-45deg);
}
.doc-tab.active {
  z-index: 2;
  background-color: #808080;
  color: #fff;
  font-weight: bold;
}
.doc-tab span {
  position: relative;
}
.x {
  position: relative;
  z-index: 1;
  width: 12px;
  height: 11px;
  border: 1px solid #7d93bb;
  border-radius: 1px;
  background: #e8effa url("data:image/svg+xml,%3Csvg xmlns='http://www.w3.org/2000/svg' width='10' height='9'%3E%3Cpath d='M2 2l6 5M8 2l-6 5' stroke='%2316336b' stroke-width='1.600'/%3E%3C/svg%3E") no-repeat center;
}
.active .x {
  background-color: #8094b8;
}
.doc-tools {
  display: flex;
  align-items: center;
  gap: 14px;
  height: 18px;
  margin-left: auto;
  padding-right: 3px;
}
.doc-tools .down {
  border: 4px solid transparent;
  border-top: 4px solid #16336b;
  border-bottom: none;
}
.doc-page {
  display: flex;
  flex-direction: column;
  flex: 1;
  min-height: 0;
  padding: 15px 14px 0;
  border: 1px solid #6f97cf;
  border-bottom-color: #fff;
  background-color: #e8effa;
}
.charts {
  display: flex;
  flex-direction: column;
  flex: 1;
  min-height: 0;
  border: 1px solid #c4161c;
}
.chart-row {
  display: flex;
  flex: 1;
  min-height: 0;
}
.chart-row + .chart-row {
  border-top: 1px solid #c4161c;
}
.chart {
  display: flex;
  flex-direction: column;
  flex: 1;
  min-width: 0;
  background-color: #fff;
  color: #000;
}
.chart + .chart {
  border-left: 1px solid #c4161c;
}
.chart.selected {
  background-color: #dcdcdc;
}
.legend {
  display: flex;
  justify-content: center;
  gap: 17px;
  padding: 20px 9px 0 0;
  height: 48px;
  list-style: none;
  font-size: 13px;
  line-height: 20px;
}
.legend li {
  display: flex;
  align-items: center;
  gap: 5px;
}
.plot {
  display: block;
  flex: 1;
  width: 100%;
  min-height: 0;
  font-size: 12px;
}
.cursor-info {
  display: flex;
  gap: 11px;
  height: 39px;
  padding-top: 8px;
}

/* Model list */
.filter {
  padding: 4px 5px 7px 6px;
  border-width: 1px 1px 1px 0;
}
.filter .group-line {
  justify-content: space-between;
  margin-top: 8px;
  padding-right: 16px;
}
.filter a {
  color: #0000e0;
}
.filter .clear {
  margin-right: 1px;
}
.tree-box {
  display: flex;
  flex: 1;
  min-height: 0;
  margin-top: 5px;
  border-top: 1px solid #b5bfcc;
  background-color: #fff;
}
.tree {
  flex: 1;
  min-width: 0;
  overflow: hidden;
  color: #000;
}
.node {
  display: flex;
  align-items: center;
  height: 18px;
}
.node::before {
  content: "";
  order: -1;
  width: 6px;
  margin-right: 3px;
  border-top: 1px dotted #888;
}
.toggle {
  order: -2;
  width: 9px;
  height: 9px;
  border: 1px solid #8ba6c9;
  background-color: #e6effa;
  font-weight: bold;
  line-height: 6px;
  color: #000;
}
.root {
  padding-left: 4px;
  background-color: #9c9c9c;
  color: #fff;
}
.branch {
  margin-left: 28px;
  border-left: 1px dotted #888;
}
.branch .node {
  margin-left: -5px;
}
.leaves {
  margin-left: 19px;
  border-left: 1px dotted #888;
  list-style: none;
}
.leaves li {
  display: flex;
  align-items: center;
  height: 18px;
}
.leaves li::before {
  content: "";
  width: 10px;
  margin-right: 3px;
  border-top: 1px dotted #888;
}
.scrollbar {
  display: flex;
  flex-direction: column;
  width: 17px;
  background-color: #f0f0f0;
}
.scrollbar button {
  height: 17px;
}
.thumb {
  flex: 12;
  margin-right: 1px;
  background-color: #cdcdcd;
}
.track {
  flex: 1;
}

/* Status bar */
.status-bar {
  height: 21px;
  padding-left: 3px;
  background-color: #f0f0f0;
  line-height: 24px;
}
```
FILE: charts.js
```js
const PERI = "#8b8bf0", PINK = "#e0107c", RED = "#dd1111", GREEN = "#0a7a0a", BLUE = "#0b0bcc";

// marker fill and outline for each line colour
const MARK = {
  [PERI]: ["#8188e2", "#4b57a8"],
  [PINK]: ["#d0127a", "#8a1f66"],
  [RED]: ["#c8151b", "#7d1f28"],
  [GREEN]: ["#0c6a3a", "#0b4a3a"],
  [BLUE]: ["#0b0bcc", "#0a0a9a"]
};

const steps = (n) => Array.from({ length: n }, (_, i) => 30 + 570 * i / (n - 1));
const ramp = (a, b) => steps(15).map((x, i) => [x, a + (b - a) * i / 14]);
const zip = (ys) => steps(ys.length).map((x, i) => [x, ys[i]]);
const thousand = ["0", "200", "400", "600", "800", "1 000"];

// saturated line plus one undersaturated branch per pressure
const rs = [12, 33, 57, 82, 109, 136, 166, 195, 225, 256, 288, 319, 352, 385];
const rsShapes = ["circle", "diamond", "triangle", "circle", "diamond", "diamond", "diamond", "circle", "bigSquare", "circle", "diamond", "triangle", "circle", "diamond"];
const px = steps(15);
const oilSeries = [];
rs.forEach((v, i) => {
  oilSeries.push({ color: PERI, shape: rsShapes[i], points: px.slice(i).map(x => [x, v]) });
});
oilSeries.push({ color: PERI, shape: "bigSquare", points: rs.map((v, i) => [px[i], v]) });

const visSat = [0.53, 0.42, 0.36, 0.32, 0.28, 0.26, 0.24, 0.22, 0.2, 0.19, 0.18, 0.17, 0.16, 0.15];
const visEnd = [2.9, 1.42, 0.93, 0.69, 0.53, 0.43, 0.37, 0.32, 0.29, 0.26, 0.24, 0.21, 0.19, 0.17];
visSat.forEach((s, i) => {
  const pts = px.slice(i).map((x, k) => [x, s + (visEnd[i] - s) * Math.pow(k / (14 - i), 1.5)]);
  oilSeries.push({ color: PINK, right: true, shape: i % 3 === 2 ? "triangle" : i > 6 ? "square" : "circle", points: pts });
});
oilSeries.push({ color: PINK, right: true, shape: "circle", points: visSat.map((v, i) => [px[i], v]) });
oilSeries.push({ color: GREEN, shape: "bigSquare", width: 3, points: px.map(x => [x, 1.5]) });

const charts = {
  density: {
    legend: [["DENSITY", PERI]],
    bottom: 70, right: 35, frame: "#000", slanted: true,
    unit: "KG/SM3", y: [0, 2000], yLabels: ["0", "400", "800", "1 200", "1 600", "2 000"],
    x: [0, 2], xLabels: ["densityO", "densityW", "densityG"],
    series: [{ color: PERI, points: [[0, 825], [1, 1048], [2, 0]] }]
  },
  negComp: {
    legend: [["Tcgas", PERI], ["Tcoil", PINK]],
    bottom: 60, right: 35,
    unit: "1/BARSA", y: [0, 0.05], yLabels: ["0", "0.01", "0.02", "0.03", "0.04", "0.05"],
    x: [0, 1000], xLabels: thousand, xUnit: "BARSA",
    series: [
      { color: PERI, points: zip([.0352, .0208, .015, .0117, .0094, .0079, .0067, .0058, .0051, .0044, .0039, .0034, .003, .0027, .0024, .0022, .002, .0018, .0017, .0015, .0014, .0013, .0012, .0011, .001, .001, .0009, .0009, .0008, .0008]) },
      { color: PINK, points: zip([.0204, .0113, .0074, .006, .0046, .0038, .0031, .0026, .0022, .0019, .0016, .0014, .0013, .0011, .001, .0009, .0008, .0007, .0007, .0006, .0005, .0005, .0004, .0004, .0003, .0003, .0002, .0002, .0002, .0001]) }
    ]
  },
  gas: {
    legend: [["Bg", RED], ["VISg", PERI]],
    bottom: 60, right: 69,
    unit: "RM3/SM3", y: [0, 0.1], yLabels: ["0", "0.02", "0.04", "0.06", "0.08", "0.1"],
    unit2: "CP", y2: [0, 0.05], y2Labels: ["0", "0.01", "0.02", "0.03", "0.04", "0.05"],
    x: [0, 1000], xLabels: ["0", "200", "400", "600", "800", "1 0..."], xUnit: "BARSA",
    leftMarks: [RED], rightMarks: [PERI],
    series: [
      { color: RED, points: zip([.0482, .0198, .0122, .0089, .0071, .006, .0053, .0047, .0044, .004, .0038, .0036, .0035, .0034, .0032]) },
      { color: PERI, right: true, points: zip([.01495, .01586, .017, .0185, .02017, .02198, .0238, .0257, .02757, .0294, .03104, .0328, .03444, .036, .03754]) }
    ]
  },
  oil: {
    legend: [["Bo", GREEN, "square"], ["Rs", PERI, "square"], ["VISo", PINK, "square"]],
    bottom: 60, right: 65,
    unit: "RM3/SM3", y: [0, 500], yLabels: ["0", "100", "200", "300", "400", "500"],
    unit2: "CP", y2: [0, 5], y2Labels: ["0", "1", "2", "3", "4", "5"],
    x: [0, 1000], xLabels: thousand, xUnit: "BARSA",
    leftMarks: [GREEN, PERI], rightMarks: [PINK],
    series: oilSeries
  },
  water: {
    legend: [["Bw", BLUE], ["VISw", PERI]],
    bottom: 60, right: 65,
    unit: "RM3/SM3", y: [1.0694, 1.0697], yLabels: ["1.069 4", "1.069 46", "1.069 52", "1.069 58", "1.069 64", "1.069 7"],
    unit2: "CP", y2: [0.3106, 0.3114], y2Labels: ["0.310 6", "0.310 76", "0.310 92", "0.311 08", "0.311 24", "0.311 4"],
    x: [0, 1000], xLabels: thousand, xUnit: "BARSA",
    leftMarks: [BLUE], rightMarks: [PERI],
    series: [
      { color: BLUE, points: ramp(1.069635, 1.0694877) },
      { color: PERI, right: true, points: ramp(0.3106614, 0.311334) }
    ]
  }
};

function marker(x, y, color, shape, outline) {
  const [fill, dark] = MARK[color];
  const style = `fill="${fill}" stroke="${outline || dark}"`;
  if (shape === "square") return `<rect x="${x - 2}" y="${y - 2}" width="4" height="4" ${style}/>`;
  if (shape === "bigSquare") return `<rect x="${x - 2.5}" y="${y - 2.5}" width="5" height="5" ${style}/>`;
  if (shape === "triangle") return `<path d="M${x} ${y - 2.5}l2.5 4.500h-5z" ${style}/>`;
  if (shape === "diamond") return `<path d="M${x} ${y - 2.500}l2.500 2.500-2.500 2.500-2.500-2.500z" ${style}/>`;
  return `<circle cx="${x}" cy="${y}" r="2.5" ${style}/>`;
}

function line(x1, y1, x2, y2, color, width = 1) {
  return `<path d="M${x1} ${y1}L${x2} ${y2}" stroke="${color}" stroke-width="${width}"/>`;
}

function text(x, y, anchor, str, extra = "") {
  return `<text x="${x}" y="${y}" text-anchor="${anchor}" ${extra}>${str}</text>`;
}

function draw(box) {
  const c = charts[box.dataset.chart];
  const legend = c.legend.map(([name, color, shape]) =>
    `<li><svg width="26" height="8">${line(0, 4, 26, 4, color, 2)}${marker(13, 4, color, shape)}</svg>${name}</li>`).join("");
  box.innerHTML = `<ul class="legend">${legend}</ul><svg class="plot"></svg>`;

  const svg = box.querySelector(".plot");
  const { width, height } = svg.getBoundingClientRect();
  const L = 64.5, T = 39.5;
  const R = Math.round(width - c.right) + 0.5;
  const B = Math.round(height - c.bottom) + 0.5;
  const frame = c.frame || "#999";
  const sx = v => L + (v - c.x[0]) / (c.x[1] - c.x[0]) * (R - L);
  const sy = (v, range) => B - (v - range[0]) / (range[1] - range[0]) * (B - T);
  let out = `<rect x="${L}" y="${T}" width="${R - L}" height="${B - T}" fill="#fff"/>`;

  const ny = c.yLabels.length - 1;
  const nx = c.xLabels.length - 1;
  for (let i = 1; i < ny; i++) {
    const y = Math.round(B - (B - T) * i / ny - 0.5) + 0.5;
    out += line(L, y, R, y, "#c6c6c6");
  }
  for (let i = 1; i < nx; i++) {
    const x = Math.round(L + (R - L) * i / nx - 0.5) + 0.5;
    out += line(x, T, x, B, "#c6c6c6");
  }
  out += `<rect x="${L}" y="${T}" width="${R - L}" height="${B - T}" fill="none" stroke="${frame}"/>`;

  c.yLabels.forEach((label, i) => {
    const y = Math.round(B - (B - T) * i / ny - 0.5) + 0.5;
    out += line(L - 10, y, L, y, "#000") + text(L - 13.5, y + 4, "end", label);
    if (c.y2Labels) out += line(R, y, R + 10, y, "#000") + text(R + 17.5, y + 4, "start", c.y2Labels[i]);
  });
  c.xLabels.forEach((label, i) => {
    const x = Math.round(L + (R - L) * i / nx - 0.5) + 0.5;
    out += line(x, B, x, B + 7, "#000");
    if (c.slanted) out += text(0, 0, "end", label, `transform="translate(${x + 5} ${B + 18}) rotate(-45)"`);
    else out += text(x + 2, B + 21, "middle", label);
  });
  out += text(L - 4, T - 14, "end", c.unit);
  if (c.unit2) out += text(R + 3, T - 14, "start", c.unit2);
  if (c.xUnit) out += text(R - 3, B + 42, "end", c.xUnit);

  c.series.forEach(s => {
    const pts = s.points.map(([x, y]) => [sx(x), sy(y, s.right ? c.y2 : c.y)]);
    out += `<polyline points="${pts.join(" ")}" fill="none" stroke="${s.color}" stroke-width="${s.width || 2}"/>`;
    out += pts.map(([x, y]) => marker(x, y, s.color, s.shape)).join("");
  });

  // small keys beside the axes
  (c.leftMarks || []).forEach((color, i) => {
    const y = B - 15 - 14 * i;
    out += line(L - 25, y, L - 5, y, color, 2) + marker(L - 15, y, color, "circle", "#000");
  });
  (c.rightMarks || []).forEach(color => {
    out += line(R + 5, B - 15, R + 25, B - 15, color, 2) + marker(R + 15, B - 15, color, "circle", "#000");
  });
  svg.innerHTML = out;
}

function drawAll() {
  document.querySelectorAll(".chart").forEach(draw);
}
drawAll();
window.addEventListener("resize", drawAll);
```
